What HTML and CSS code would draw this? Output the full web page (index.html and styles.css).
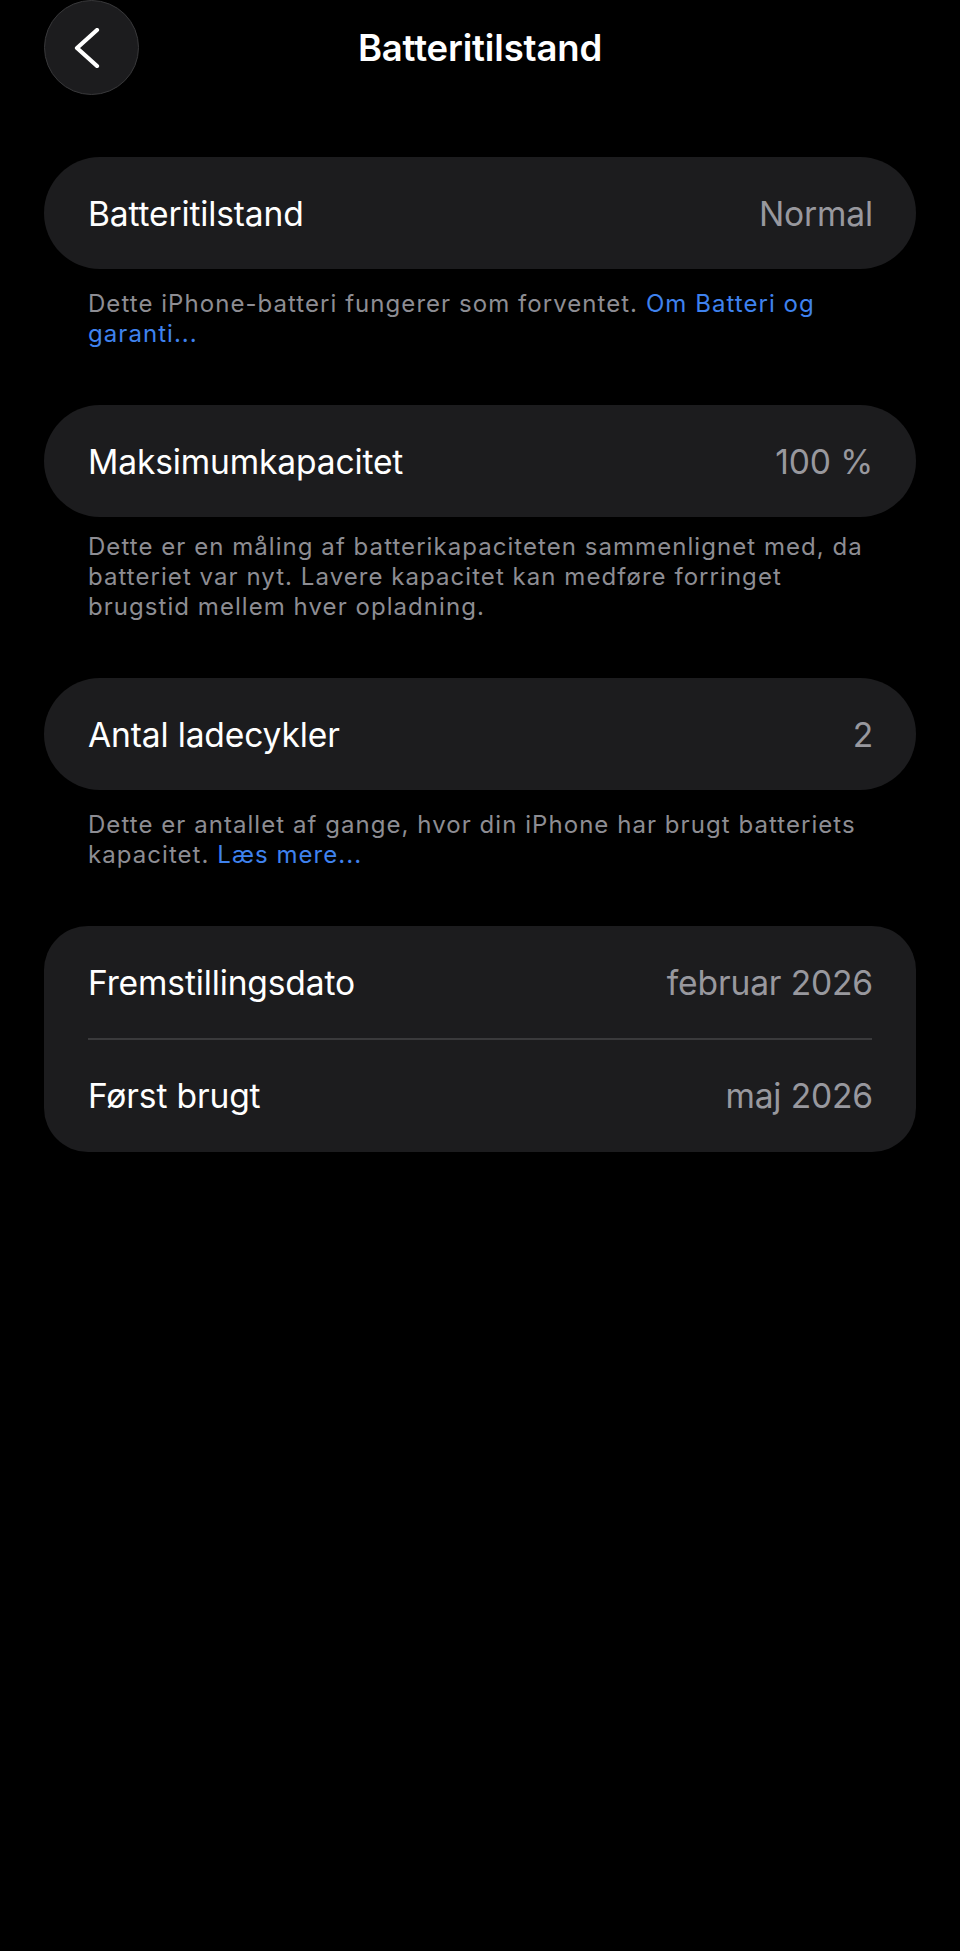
FILE: index.html
```html
<!DOCTYPE html>
<html lang="da">
<head>
  <meta charset="UTF-8" />
  <meta name="viewport" content="width=device-width, initial-scale=1.0" />
  <title>Batteritilstand</title>
  <link rel="stylesheet" href="styles.css">
</head>
<body>
  <header class="topbar">
    <button class="back" aria-label="Tilbage">
      <svg width="40" height="40" viewBox="0 0 40 40">
        <path d="M28 2 L8 20 L28 38" fill="none" stroke="#fff" stroke-width="4.2" stroke-linecap="round" stroke-linejoin="round"/>
      </svg>
    </button>
    <h1 class="title">Batteritilstand</h1>
    <span></span>
  </header>

  <main class="content">
    <div class="group">
      <div class="row">
        <span class="label">Batteritilstand</span>
        <span class="value">Normal</span>
      </div>
    </div>
    <p class="note">Dette iPhone-batteri fungerer som forventet. <a href="#">Om Batteri og garanti...</a></p>

    <div class="group">
      <div class="row">
        <span class="label">Maksimumkapacitet</span>
        <span class="value">100 %</span>
      </div>
    </div>
    <p class="note note-tight">Dette er en måling af batterikapaciteten sammenlignet med, da batteriet var nyt. Lavere kapacitet kan medføre forringet brugstid mellem hver opladning.</p>

    <div class="group">
      <div class="row">
        <span class="label">Antal ladecykler</span>
        <span class="value">2</span>
      </div>
    </div>
    <p class="note">Dette er antallet af gange, hvor din iPhone har brugt batteriets kapacitet. <a href="#">Læs mere...</a></p>

    <div class="group group-list">
      <div class="row">
        <span class="label">Fremstillingsdato</span>
        <span class="value">februar 2026</span>
      </div>
      <div class="divider"></div>
      <div class="row">
        <span class="label">Først brugt</span>
        <span class="value">maj 2026</span>
      </div>
    </div>
  </main>
</body>
</html>
```

FILE: styles.css
```css
body { margin: 0; background: #000; color: #fff; font-family: Inter, "Noto Sans", sans-serif; }

.topbar { display: grid; grid-template-columns: 95px 1fr 95px; align-items: center; padding: 0 44px; height: 95px; }
.back { width: 95px; height: 95px; border-radius: 50%; background: #1c1c1e; border: 1.5px solid #38383a; display: flex; align-items: center; justify-content: center; padding: 0 6px 0 0; }
.title { margin: 0; text-align: center; font-size: 36.5px; font-weight: 600; letter-spacing: -0.15px; }

.content { padding: 62px 44px 0; }
.group { background: #1c1c1e; border-radius: 56px; }
.group-list { border-radius: 44px; }
.row { display: flex; justify-content: space-between; align-items: center; height: 112px; padding: 0 43px 0 44px; font-size: 33.6px; letter-spacing: -0.15px; }
.value { color: #98989e; }
.divider { height: 1.5px; background: #3a3a3c; margin: 0 44px; }

.note { margin: 20px 0 56px; padding: 0 44px; font-size: 24px; line-height: 30px; color: #8d8d93; letter-spacing: 1.05px; }
.note-tight { margin-top: 15px; }
.note a { color: #3f82ee; text-decoration: none; }
```
